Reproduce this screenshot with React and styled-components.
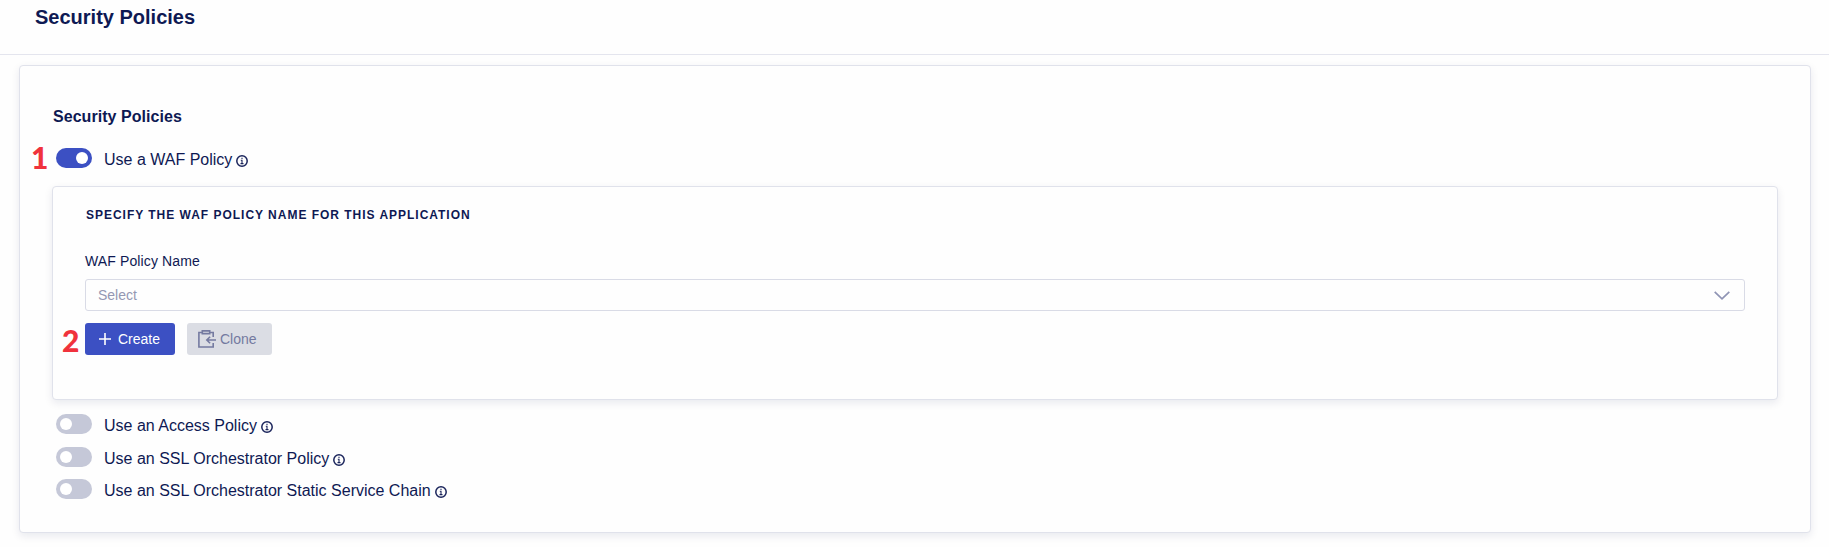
import React from "react";
import styled, { createGlobalStyle } from "styled-components";

const GlobalStyle = createGlobalStyle`
  *, *::before, *::after { box-sizing: border-box; }
  body {
    margin: 0;
    background: #fefefe;
    color: #0e1953;
    font-family: "Liberation Sans", Arial, sans-serif;
  }
`;

const Page = styled.div`
  height: 547px;
  display: flex;
  flex-direction: column;
  overflow: hidden;
`;

const Header = styled.header`
  height: 55px;
  flex: none;
  padding: 5px 0 0 35px;
  border-bottom: 1px solid #e4e5ee;
`;

const Title = styled.h1`
  margin: 0;
  font-size: 20px;
  line-height: 24px;
  font-weight: 700;
`;

const Card = styled.section`
  background: #fefefe;
  border: 1px solid #e0e2eb;
  border-radius: 4px;
  box-shadow: 0 3px 8px rgba(14, 25, 83, 0.09);
`;

const OuterCard = styled(Card)`
  height: 468px;
  margin: 10px 18px 0 19px;
  padding: 41px 32px 0;
`;

const InnerCard = styled(Card)`
  height: 214px;
  margin-top: 18px;
  padding: 20px 32px 0;
`;

const SectionTitle = styled.h2`
  margin: 0 0 21px 1px;
  font-size: 16px;
  line-height: 20px;
  font-weight: 700;
  letter-spacing: 0.05px;
`;

const ToggleRow = styled.div`
  position: relative;
  display: flex;
  align-items: center;
  height: 20px;
  margin-left: 4px;
  margin-top: ${(p) => p.$gap || 0}px;
`;

const Track = styled.button`
  width: 36px;
  height: 20px;
  flex: none;
  border: 0;
  border-radius: 10px;
  padding: 0 4px;
  display: flex;
  align-items: center;
  justify-content: ${(p) => (p.$on ? "flex-end" : "flex-start")};
  background: ${(p) => (p.$on ? "#3c50c3" : "#c5c8d8")};
`;

const Knob = styled.span`
  width: 12px;
  height: 12px;
  border-radius: 50%;
  background: #fff;
`;

const ToggleLabel = styled.span`
  margin: 3px 4px 0 12px;
  font-size: 16px;
  line-height: 20px;
  white-space: nowrap;
`;

const InfoSvg = styled.svg`
  width: 12px;
  height: 12px;
  flex: none;
  margin-top: 6px;
`;

const Marker = styled.span`
  position: absolute;
  left: ${(p) => p.$left}px;
  top: ${(p) => p.$top}px;
  color: #f0323c;
  font: 900 30px/36px Lato, sans-serif;
`;

const Caption = styled.h3`
  margin: 0 0 30px 1px;
  font-size: 12px;
  line-height: 16px;
  font-weight: 700;
  letter-spacing: 0.98px;
  text-transform: uppercase;
`;

const FieldLabel = styled.label`
  display: block;
  margin-bottom: 10px;
  font-size: 14px;
  line-height: 16px;
  letter-spacing: 0.12px;
`;

const SelectBox = styled.div`
  height: 32px;
  display: flex;
  align-items: center;
  justify-content: space-between;
  padding: 0 14px 0 12px;
  border: 1px solid #d9dbe6;
  border-radius: 3px;
  color: #9498b3;
  font-size: 14px;
`;

const Actions = styled.div`
  position: relative;
  display: flex;
  gap: 12px;
  margin-top: 12px;
`;

const Button = styled.button`
  height: 32px;
  width: ${(p) => p.$width}px;
  display: flex;
  align-items: center;
  gap: ${(p) => (p.$primary ? 7 : 4)}px;
  padding: 0 0 0 ${(p) => (p.$primary ? 14 : 11)}px;
  border: 0;
  border-radius: 3px;
  font: 14px "Liberation Sans", Arial, sans-serif;
  color: ${(p) => (p.$primary ? "#fff" : "#747aa0")};
  background: ${(p) => (p.$primary ? "#3c50c3" : "#dbdde4")};
`;

const InfoIcon = () => (
  <InfoSvg viewBox="0 0 12 12" fill="none" stroke="#1a245b">
    <circle cx="6" cy="6" r="5.2" strokeWidth="1.5" />
    <path d="M6 2.8v1.2M4.800 5.300H6v3.200M4.500 8.600h3" strokeWidth="1.1" />
  </InfoSvg>
);

const PlusIcon = () => (
  <svg width="12" height="12" viewBox="0 0 12 12" stroke="#fff" strokeWidth="1.6">
    <path d="M6 0v12M0 6h12" />
  </svg>
);

const CloneIcon = () => (
  <svg width="18" height="18" viewBox="0 0 18 18" fill="none" stroke="#747aa0" strokeWidth="1.6">
    <path d="M4.500 2.500H.9v14.500h14.300V13M11.500 2.500h3.700v4.500" />
    <path d="M4.300 .9h7.400v2.700h-7.400z" />
    <path d="M18 10H9M12.100 6.700L8.800 10l3.300 3.300" />
  </svg>
);

const ChevronIcon = () => (
  <svg width="16" height="9" viewBox="0 0 16 9" fill="none" stroke="#8f94b4" strokeWidth="1.7">
    <path d="M.7 .8L8 7.800 15.300 .8" />
  </svg>
);

const Toggle = ({ label, on, gap, children }) => (
  <ToggleRow $gap={gap}>
    {children}
    <Track $on={on} role="switch" aria-checked={!!on} aria-label={label}>
      <Knob />
    </Track>
    <ToggleLabel>{label}</ToggleLabel>
    <InfoIcon />
  </ToggleRow>
);

export default function App() {
  return (
    <Page>
      <GlobalStyle />
      <Header>
        <Title>Security Policies</Title>
      </Header>
      <OuterCard>
        <SectionTitle>Security Policies</SectionTitle>
        <Toggle label="Use a WAF Policy" on>
          <Marker $left={-25} $top={-9}>1</Marker>
        </Toggle>
        <InnerCard>
          <Caption>Specify the WAF Policy Name for this Application</Caption>
          <FieldLabel>WAF Policy Name</FieldLabel>
          <SelectBox>
            <span>Select</span>
            <ChevronIcon />
          </SelectBox>
          <Actions>
            <Marker $left={-23} $top={-1}>2</Marker>
            <Button $primary $width={90}>
              <PlusIcon />
              Create
            </Button>
            <Button $width={85}>
              <CloneIcon />
              Clone
            </Button>
          </Actions>
        </InnerCard>
        <Toggle label="Use an Access Policy" gap={14} />
        <Toggle label="Use an SSL Orchestrator Policy" gap={13} />
        <Toggle label="Use an SSL Orchestrator Static Service Chain" gap={12} />
      </OuterCard>
    </Page>
  );
}
